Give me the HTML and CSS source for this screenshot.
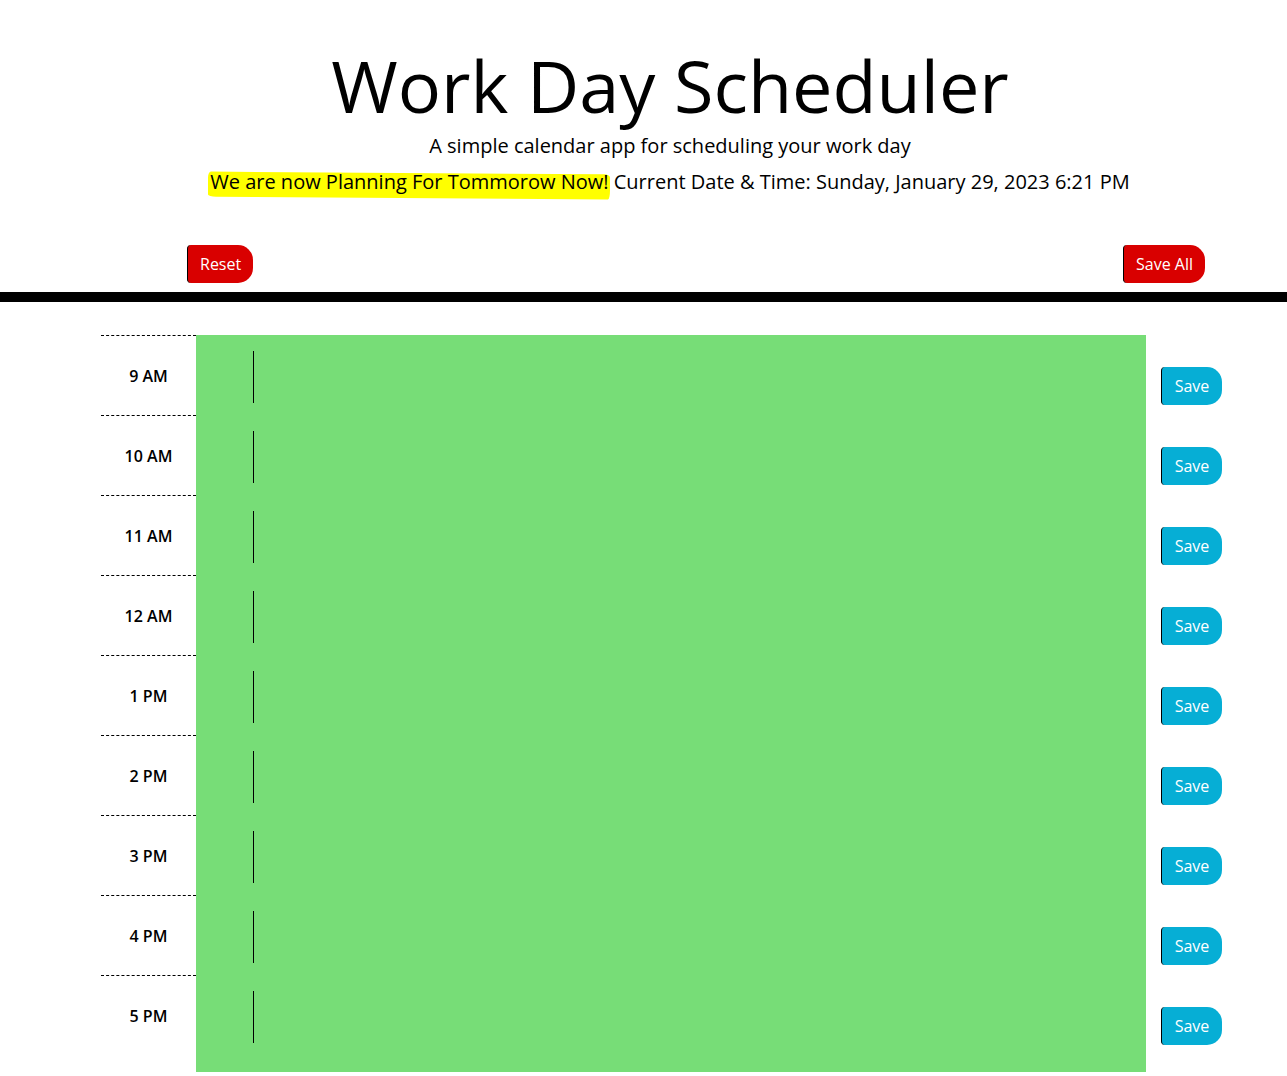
FILE: index.html
```html
<!DOCTYPE html>
<html lang="en">
<head>
<meta charset="utf-8">
<title>Work Day Scheduler</title>
<link rel="stylesheet" href="styles.css">
</head>
<body>
<header class="header">
  <h1 class="title">Work Day Scheduler</h1>
  <p class="lead">A simple calendar app for scheduling your work day</p>
  <p class="lead date-line"><span class="highlight">We are now Planning For Tommorow Now!</span> Current Date &amp; Time: Sunday, January 29, 2023 6:21 PM</p>
</header>
<div class="actions">
  <button class="btn btn-red">Reset</button>
  <button class="btn btn-red">Save All</button>
</div>
<main class="schedule">
  <div class="row"><div class="hour">9 AM</div><div class="description"><div class="entry"></div></div><button class="btn btn-save">Save</button></div>
  <div class="row"><div class="hour">10 AM</div><div class="description"><div class="entry"></div></div><button class="btn btn-save">Save</button></div>
  <div class="row"><div class="hour">11 AM</div><div class="description"><div class="entry"></div></div><button class="btn btn-save">Save</button></div>
  <div class="row"><div class="hour">12 AM</div><div class="description"><div class="entry"></div></div><button class="btn btn-save">Save</button></div>
  <div class="row"><div class="hour">1 PM</div><div class="description"><div class="entry"></div></div><button class="btn btn-save">Save</button></div>
  <div class="row"><div class="hour">2 PM</div><div class="description"><div class="entry"></div></div><button class="btn btn-save">Save</button></div>
  <div class="row"><div class="hour">3 PM</div><div class="description"><div class="entry"></div></div><button class="btn btn-save">Save</button></div>
  <div class="row"><div class="hour">4 PM</div><div class="description"><div class="entry"></div></div><button class="btn btn-save">Save</button></div>
  <div class="row row-last"><div class="hour">5 PM</div><div class="description"><div class="entry"></div></div><button class="btn btn-save">Save</button></div>
</main>
</body>
</html>
```
FILE: styles.css
```css
* { box-sizing: border-box; }
html, body { margin: 0; padding: 0; background: #fff; }
body {
  font-family: "Open Sans", "Liberation Sans", sans-serif;
  color: #000;
  width: 1287px;
}
.header {
  padding: 42px 0 0 53px;
  text-align: center;
}
.title {
  margin: 0;
  font-size: 72px;
  line-height: 86px;
  font-weight: 400;
}
.lead {
  margin: 3px 0 0;
  font-size: 20px;
  line-height: 30px;
  font-weight: 400;
}
.date-line { margin-top: 6px; }
.highlight {
  position: relative;
  z-index: 0;
}
.highlight::before {
  content: "";
  position: absolute;
  left: -2px;
  right: -2px;
  top: 5px;
  bottom: -3px;
  background: #ffff00;
  border-radius: 3px 6px 2px 8px / 6px 3px 9px 2px;
  transform: skewY(0.4deg);
  z-index: -1;
}
.actions {
  display: flex;
  justify-content: space-between;
  padding: 48px 82px 9px 187px;
  border-bottom: 10px solid #000;
}
.btn {
  font-family: "Open Sans", "Liberation Sans", sans-serif;
  font-size: 16px;
  line-height: 24px;
  padding: 6px 12px;
  height: 38px;
  color: #fff;
  border: 0;
  border-left: 1px solid #000;
  border-radius: 4px 15px 15px 4px;
  cursor: pointer;
}
.btn-red { background: #d90000; }
.schedule {
  padding: 33px 0 0 101px;
}
.row {
  display: flex;
  height: 80px;
}
.row-last { height: 97px; }
.hour {
  width: 95px;
  height: 80px;
  border-top: 1px dashed #000;
  display: flex;
  align-items: center;
  justify-content: center;
  font-size: 16px;
  font-weight: 600;
}
.description {
  width: 950px;
  background: #77dd77;
  padding: 16px 0 0 57px;
}
.entry {
  width: 1px;
  height: 52px;
  background: #000;
}
.btn-save {
  background: #06aed5;
  margin: 32px 0 0 15px;
  width: 61px;
  padding: 6px 0;
}
```
